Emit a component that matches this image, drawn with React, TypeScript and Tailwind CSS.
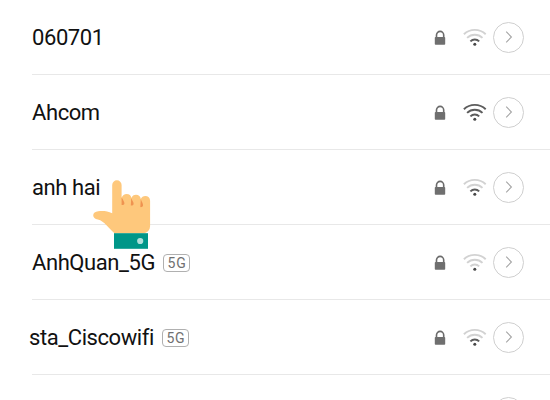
import { clsx } from 'clsx';

type Network = { name: string; level: number; is5G?: boolean; shift?: string };

const networks: Network[] = [
  { name: '060701', level: 1 },
  { name: 'Ahcom', level: 3 },
  { name: 'anh hai', level: 1 },
  { name: 'AnhQuan_5G', level: 0, is5G: true },
  { name: 'sta_Ciscowifi', level: 1, is5G: true, shift: '-ml-[3px]' },
  { name: '', level: 1 },
];

function LockIcon() {
  return (
    <svg width="12" height="16" viewBox="0 0 12 16" fill="none">
      <path d="M2.5 8.4V6a3.6 3.6 0 0 1 7.2 0v2.4" stroke="#6b6b6b" strokeWidth="1.6" />
      <rect x="0.8" y="8" width="10.4" height="7.7" rx="0.8" fill="#6f6f6f" />
    </svg>
  );
}

function WifiIcon({ level }: { level: number }) {
  const color = (n: number) => (level >= n ? '#5c5c5c' : '#d2d2d2');
  return (
    <svg width="24" height="20" viewBox="0 0 24 20" fill="none" strokeWidth="1.9">
      <path d="M0.9 7.2a15.8 15.8 0 0 1 21.8 0" stroke={color(3)} />
      <path d="M4.1 10.9a11 11 0 0 1 15.4 0" stroke={color(2)} />
      <path d="M7.4 14.3a6.2 6.2 0 0 1 8.8 0" stroke={color(1)} />
      <circle cx="11.8" cy="17.2" r="1.5" fill="#484848" />
    </svg>
  );
}

function DetailButton() {
  return (
    <button className="flex size-[31px] items-center justify-center rounded-full border border-[#cfcfcf]">
      <svg width="8" height="12" viewBox="0 0 8 12" fill="none">
        <path d="M1.2 0.7L6.4 6L1.2 11.3" stroke="#a4a4a4" strokeWidth="1.1" />
      </svg>
    </button>
  );
}

function NetworkRow({ network }: { network: Network }) {
  return (
    <li className="flex h-[75px] shrink-0 items-center border-b border-[#e8e8e8] pr-[26px]">
      <span className={clsx('pt-0.5 text-[22px] leading-6 tracking-[-0.42px] whitespace-nowrap text-[#111]', network.shift)}>{network.name}</span>
      {network.is5G && (
        <span className="mt-px ml-2 flex h-[18px] w-[27px] items-center justify-center rounded-[4px] border border-[#b0b0b0] pt-px pl-px text-[14px] leading-none tracking-[0.8px] text-[#707070]">
          5G
        </span>
      )}
      <div className="ml-auto flex items-center">
        <LockIcon />
        <span className="mr-[6px] ml-[17px]"><WifiIcon level={network.level} /></span>
        <DetailButton />
      </div>
    </li>
  );
}

function PointingHand() {
  return (
    <svg className="absolute top-[178px] left-[92px]" width="60" height="72" viewBox="0 0 60 72">
      <path
        d="M20.2 7a4.7 4.7 0 0 1 9.4 0v13c.8-2.7 2.8-4 5-4c2.7 0 4.6 1.6 4.8 4.1c.7-2.2 2.4-3.4 4.6-3.4c2.7 0 4.6 1.8 4.8 4.2c.8-2 2.4-3 4.5-3c2.8 0 4.8 2 4.8 4.8v25.5a7 7 0 0 1-7 7H22.5C16.5 50.5 12.7 43.2 5.8 41.6C3 41 1.2 39.7 1.2 37.3c0-2.3 2-3.9 5-4.1c5.4-.4 9.5-.1 14 2Z"
        fill="#fec87c"
      />
      <path d="M29.6 19.2c1.2 2.7 3 4.5 2.8 6.2c-.1 1.2-1.2 1.8-2.8 1.7Z" fill="#ef9350" />
      <path d="M39.2 20.2c1.1 2.7 2.7 4.2 2.4 5.8c-.2 1.2-1.4 1.7-2.8 1.5Z" fill="#ef9350" />
      <path d="M48.8 21.2c1.1 2.7 2.5 4.7 2.2 6.3c-.2 1.2-1.3 1.8-2.7 1.6Z" fill="#ef9350" />
      <rect x="22" y="55.2" width="34" height="15.6" fill="#009688" />
      <circle cx="48.2" cy="63" r="3.1" fill="#b2dfdb" />
    </svg>
  );
}

export default function App() {
  return (
    <div className="relative h-[400px] w-[550px] overflow-hidden bg-white font-['Roboto',sans-serif]">
      <ul className="flex flex-col pl-8">
        {networks.map((network, idx) => (
          <NetworkRow key={idx} network={network} />
        ))}
      </ul>
      <PointingHand />
    </div>
  );
}
